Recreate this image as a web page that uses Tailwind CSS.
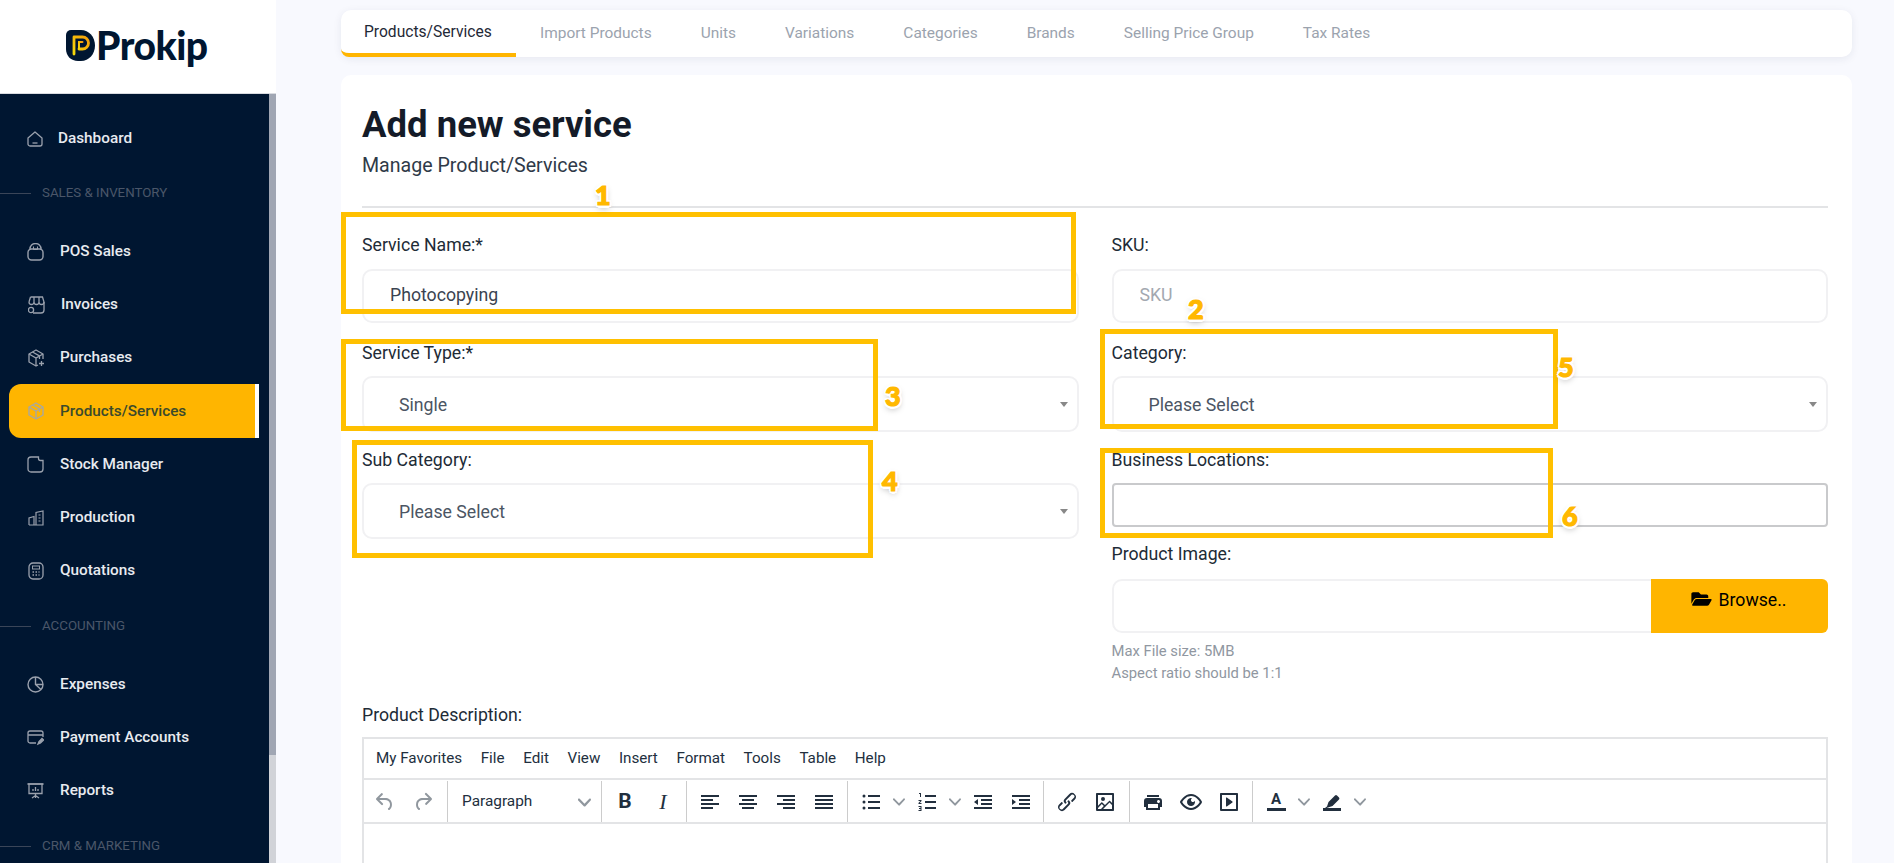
<!doctype html>
<html lang="en">
  <head>
    <meta charset="UTF-8" />
    <title>Add new service</title>
    <script src="https://cdn.jsdelivr.net/npm/@tailwindcss/browser@4"></script>
  </head>
  <body class="bg-[#f8f9fe] font-[Roboto,sans-serif] text-[#212b36]">
    <div class="relative flex h-[863px] w-[1894px] overflow-hidden">

      <!-- Sidebar -->
      <aside class="flex w-[276px] shrink-0 flex-col">
        <div class="flex h-[94px] items-center border-b border-[#d9dbe0] bg-white pb-[3px] pl-[66px]">
          <svg class="h-[31px] w-[29px] shrink-0" viewBox="0 0 29 31">
            <defs><linearGradient id="logoP" x1="0" y1="1" x2="1" y2="0"><stop offset="0" stop-color="#f5d90a" /><stop offset="1" stop-color="#f59e0b" /></linearGradient></defs>
            <path d="M0 5a5 5 0 0 1 5-5h10c8 0 14 7 14 15.500S23 31 15 31h-3C5 31 0 26 0 19Z" fill="#001631" />
            <path d="M8 24V7h8.500a6 6 0 0 1 0 12H13" fill="none" stroke="url(#logoP)" stroke-width="2.800" stroke-linecap="round" stroke-linejoin="round" />
            <path d="M13 19v-7h3.500" fill="none" stroke="url(#logoP)" stroke-width="2" stroke-linecap="round" />
          </svg>
          <span class="ml-[1px] font-[Lato,sans-serif] text-[39px] leading-none font-black tracking-[-0.5px] text-[#001631]">Prokip</span>
        </div>
        <div class="flex min-h-0 flex-1">
          <nav class="w-[269px] overflow-hidden bg-[#001631] pt-[18px] text-[15.300px] font-medium text-[#e8ebf0]">
            <a class="flex h-[53px] items-center pl-[27px]">
              <svg class="h-[16px] w-[16px] shrink-0 text-[#9aa1ad]" viewBox="0 0 16 16" fill="none" stroke="currentColor" stroke-width="1.300"><path d="M1 7l7-6 7 6v6a2 2 0 0 1-2 2H3a2 2 0 0 1-2-2Z" stroke-linejoin="round" /><path d="M5.500 12h5" /></svg>
              <span class="ml-[15px]">Dashboard</span>
            </a>
            <div class="mt-[13px] flex h-[30px] items-center gap-[11px] text-[13.300px] font-normal text-[#4b5669]">
              <span class="h-px w-[31px] bg-[#3a4558]"></span>SALES &amp; INVENTORY
            </div>
            <div class="h-[17px]"></div>
            <a class="flex h-[53px] items-center pl-[27px]">
              <svg class="h-[18px] w-[17px] shrink-0 text-[#9aa1ad]" viewBox="0 0 17 18" fill="none" stroke="currentColor" stroke-width="1.400"><path d="M3 6a5.500 5.500 0 0 1 11 0" /><rect x="1" y="6" width="15" height="11" rx="3.500" /><path d="M6.500 3.500v3h4v-3" stroke-width="1" /></svg>
              <span class="ml-[16px]">POS Sales</span>
            </a>
            <a class="flex h-[53px] items-center pl-[28px]">
              <svg class="h-[18px] w-[17px] shrink-0 text-[#9aa1ad]" viewBox="0 0 17 18" fill="none" stroke="currentColor" stroke-width="1.300"><path d="M2.500 1h12l1.500 5v8a3 3 0 0 1-3 3H5" /><path d="M1 6a2.500 2.500 0 0 0 5 0 2.500 2.500 0 0 0 5 0 2.500 2.500 0 0 0 5 0M6 1v5M11 1v5M1 6l1.500-5" /><circle cx="3" cy="14" r="2.600" /></svg>
              <span class="ml-[16px]">Invoices</span>
            </a>
            <a class="flex h-[53px] items-center pl-[28px]">
              <svg class="h-[18px] w-[17px] shrink-0 text-[#9aa1ad]" viewBox="0 0 17 18" fill="none" stroke="currentColor" stroke-width="1.300"><path d="M10 16l-2 1-7-4V5l7-4 7 4v5" stroke-linejoin="round" /><path d="M1 5l7 4 7-4M8 9v8M4.500 3l7 4v3" /><path d="M13.500 12v5M11 14.500h5" /></svg>
              <span class="ml-[15px]">Purchases</span>
            </a>
            <a class="relative ml-[9px] flex h-[54px] w-[250px] items-center rounded-l-[12px] border-r-4 border-white bg-[#ffb500] pl-[19px] text-[#3b4a2c]">
              <svg class="h-[18px] w-[16px] shrink-0 text-[#a8a8a0]" viewBox="0 0 16 18" fill="none" stroke="currentColor" stroke-width="1.400"><path d="M8 1l7 4v8l-7 4-7-4V5Z" stroke-linejoin="round" /><path d="M1 5l7 4 7-4M8 9v8M4.500 3l7 4v3" /></svg>
              <span class="ml-[16px]">Products/Services</span>
            </a>
            <a class="flex h-[53px] items-center pl-[27px]">
              <svg class="h-[17px] w-[17px] shrink-0 text-[#9aa1ad]" viewBox="0 0 17 17" fill="none" stroke="currentColor" stroke-width="1.300"><path d="M1 4a3 3 0 0 1 3-3h7.500v1.500a2 2 0 0 0 2 2H16V13a3 3 0 0 1-3 3H4a3 3 0 0 1-3-3Z" /></svg>
              <span class="ml-[16px]">Stock Manager</span>
            </a>
            <a class="flex h-[53px] items-center pl-[28px]">
              <svg class="h-[16px] w-[16px] shrink-0 text-[#9aa1ad]" viewBox="0 0 16 16" fill="none" stroke="currentColor" stroke-width="1.200"><path d="M1 15V8l5-1.500V15M1 15h14V1l-7 1.500V15" /><path d="M10.500 5h2M10.500 8h2M10.500 11h2" /></svg>
              <span class="ml-[16px]">Production</span>
            </a>
            <a class="flex h-[53px] items-center pl-[28px]">
              <svg class="h-[18px] w-[16px] shrink-0 text-[#9aa1ad]" viewBox="0 0 16 18" fill="none" stroke="currentColor" stroke-width="1.300"><rect x="1" y="1" width="14" height="16" rx="4" /><rect x="4.500" y="4" width="7" height="3" stroke-width="1" /><path d="M4.500 10h1.500M7.500 10h1.500M10.500 10h1M4.500 13h1.500M7.500 13h1.500M10.500 13h1" /></svg>
              <span class="ml-[16px]">Quotations</span>
            </a>
            <div class="mt-[14px] flex h-[30px] items-center gap-[11px] text-[13.300px] font-normal text-[#4b5669]">
              <span class="h-px w-[31px] bg-[#3a4558]"></span>ACCOUNTING
            </div>
            <div class="h-[17px]"></div>
            <a class="flex h-[53px] items-center pl-[27px]">
              <svg class="h-[17px] w-[17px] shrink-0 text-[#9aa1ad]" viewBox="0 0 17 17" fill="none" stroke="currentColor" stroke-width="1.400"><circle cx="8.500" cy="8.500" r="7.500" /><path d="M8.500 1v7.500l5.500 5M8.500 8.500H16" /></svg>
              <span class="ml-[16px]">Expenses</span>
            </a>
            <a class="flex h-[53px] items-center pl-[27px]">
              <svg class="h-[16px] w-[17px] shrink-0 text-[#9aa1ad]" viewBox="0 0 17 16" fill="none" stroke="currentColor" stroke-width="1.300"><path d="M9 13H3a2 2 0 0 1-2-2V3a2 2 0 0 1 2-2h11a2 2 0 0 1 2 2v4M1 5h15" /><path d="M11 14l1-2.500 3-3 1.500 1.500-3 3Z" fill="currentColor" /></svg>
              <span class="ml-[16px]">Payment Accounts</span>
            </a>
            <a class="flex h-[53px] items-center pl-[27px]">
              <svg class="h-[16px] w-[17px] shrink-0 text-[#9aa1ad]" viewBox="0 0 17 16" fill="none" stroke="currentColor" stroke-width="1.300"><path d="M0.500 1h16" stroke-width="1.800" /><path d="M2 1v9.500h13V1" /><path d="M6 8V6M8.500 8V4M11 8V6" /><path d="M8.500 11v2M5 15l3.500-2.500L12 15M8.500 12.500V15" /></svg>
              <span class="ml-[16px]">Reports</span>
            </a>
            <div class="mt-[14px] flex h-[30px] items-center gap-[11px] text-[13.300px] font-normal text-[#4b5669]">
              <span class="h-px w-[31px] bg-[#3a4558]"></span>CRM &amp; MARKETING
            </div>
          </nav>
          <div class="flex w-[7px] flex-col bg-[#d1d3d8]">
            <div class="h-[661px] bg-[#a0a6b3]"></div>
          </div>
        </div>
      </aside>

      <!-- Main -->
      <main class="ml-[65px] w-[1511px]">
        <div class="mt-[10px] flex h-[47px] rounded-[10px] bg-white text-[15.450px] text-[#9ba3ae] shadow-[0_2px_8px_rgba(30,40,80,0.08)]">
          <a class="h-[47px] w-[175px] rounded-bl-[8px] border-b-4 border-[#ffb500] pt-[11px] pl-[23px] text-[15.600px] text-[#1f2937]">Products/Services</a>
          <a class="ml-[24px] pt-[12px]">Import Products</a>
          <a class="ml-[49px] pt-[12px]">Units</a>
          <a class="ml-[49px] pt-[12px]">Variations</a>
          <a class="ml-[49px] pt-[12px]">Categories</a>
          <a class="ml-[49px] pt-[12px]">Brands</a>
          <a class="ml-[49px] pt-[12px]">Selling Price Group</a>
          <a class="ml-[49px] pt-[12px]">Tax Rates</a>
        </div>

        <section class="mt-[18px] h-[800px] rounded-[10px] bg-white pr-[24px] pl-[21px]">
          <h1 class="pt-[28px] text-[36.500px] leading-[44px] font-bold text-[#141b28]">Add new service</h1>
          <p class="mt-[6px] text-[19.600px] leading-[26px] text-[#2f3a48]">Manage Product/Services</p>
          <hr class="mt-[27px] border-t-2 border-[#e3e4e6]" />

          <div class="mt-[25px] grid grid-cols-2 gap-x-[33px] text-[17.700px]">
            <div>
              <label class="block leading-[24px]">Service Name:*</label>
              <input class="mt-[12px] h-[54px] w-full rounded-[10px] border-2 border-[#f1f1f3] pb-[3px] pl-[26px] text-[#3a4350]" value="Photocopying" />

              <label class="mt-[18px] block leading-[24px]">Service Type:*</label>
              <div class="relative mt-[11px] flex h-[56px] items-center rounded-[10px] border-2 border-[#f1f1f3] pt-[2px] pl-[35px] text-[#4b5563]">
                Single
                <span class="absolute top-[24px] right-[9px] border-x-[4px] border-t-[5px] border-x-transparent border-t-[#888]"></span>
              </div>

              <label class="mt-[16px] block leading-[24px]">Sub Category:</label>
              <div class="relative mt-[11px] flex h-[56px] items-center rounded-[10px] border-2 border-[#f1f1f3] pt-[2px] pl-[35px] text-[#4b5563]">
                Please Select
                <span class="absolute top-[24px] right-[9px] border-x-[4px] border-t-[5px] border-x-transparent border-t-[#888]"></span>
              </div>
            </div>

            <div>
              <label class="block leading-[24px]">SKU:</label>
              <input class="mt-[12px] h-[54px] w-full rounded-[10px] border-2 border-[#f1f1f3] pb-[3px] pl-[26px] placeholder:text-[#a3a8b0]" placeholder="SKU" />

              <label class="mt-[18px] block leading-[24px]">Category:</label>
              <div class="relative mt-[11px] flex h-[56px] items-center rounded-[10px] border-2 border-[#f1f1f3] pt-[2px] pl-[35px] text-[#4b5563]">
                Please Select
                <span class="absolute top-[24px] right-[9px] border-x-[4px] border-t-[5px] border-x-transparent border-t-[#888]"></span>
              </div>

              <label class="mt-[16px] block leading-[24px]">Business Locations:</label>
              <div class="mt-[11px] h-[44px] rounded-[4px] border-2 border-[#c9cacc]"></div>

              <label class="mt-[15px] block leading-[24px]">Product Image:</label>
              <div class="mt-[13px] flex h-[54px] rounded-[10px] border-2 border-[#f1f1f3]">
                <div class="flex-1"></div>
                <button class="-my-[2px] -mr-[2px] flex h-[54px] w-[177px] items-start justify-center gap-[5px] rounded-r-[6px] bg-[#ffb500] pt-[8px] pr-[2px] text-black">
                  <svg class="mt-[3px] h-[18px] w-[23px]" viewBox="0 0 576 512" fill="currentColor"><path d="M572.694 292.093L500.27 416.248A63.997 63.997 0 0 1 444.989 448H45.025c-18.523 0-30.064-20.093-20.731-36.093l72.424-124.155A64 64 0 0 1 152 256h399.964c18.523 0 30.064 20.093 20.73 36.093zM152 224h328v-48c0-26.51-21.49-48-48-48H272l-64-64H48C21.49 64 0 85.49 0 112v278.046l69.077-118.418C86.214 242.25 117.989 224 152 224z" /></svg>
                  Browse..
                </button>
              </div>
              <p class="mt-[7px] text-[14.800px] leading-[22px] text-[#9097a1]">Max File size: 5MB<br />Aspect ratio should be 1:1</p>
            </div>
          </div>

          <label class="mt-[19px] block text-[17.700px] leading-[24px]">Product Description:</label>

          <div class="mt-[10px] h-[200px] border-2 border-[#e3e4e6] text-[#222f3e]">
            <div class="flex h-[41px] items-center gap-[18.600px] border-b-2 border-[#e3e4e6] pl-[12px] text-[15.200px]">
              <span>My Favorites</span><span>File</span><span>Edit</span><span>View</span><span>Insert</span><span>Format</span><span>Tools</span><span>Table</span><span>Help</span>
            </div>
            <div class="flex h-[44px] border-b-2 border-[#e3e4e6] pt-[1px]">
              <!-- undo / redo -->
              <div class="flex items-center border-r border-[#ccc] pr-[5px] pl-[2px]">
                <span class="flex w-[38px] justify-center"><svg class="size-[24px] fill-[#222f3e]/50" viewBox="0 0 24 24"><path d="M6.400 8H12c3.700 0 6.200 2 6.800 5.100.6 2.700-.4 5.600-2.300 6.800a1 1 0 0 1-1-1.800c1.100-.6 1.800-2.700 1.400-4.600-.5-2.100-2.100-3.500-4.900-3.500H6.400l3.300 3.300a1 1 0 1 1-1.400 1.400l-5-5a1 1 0 0 1 0-1.400l5-5a1 1 0 0 1 1.400 1.400L6.400 8Z" /></svg></span>
                <span class="flex w-[38px] justify-center"><svg class="size-[24px] fill-[#222f3e]/50" viewBox="0 0 24 24"><path d="M17.600 10H12c-2.800 0-4.400 1.400-4.900 3.500-.4 2 .3 4 1.400 4.600a1 1 0 1 1-1 1.800c-2-1.200-2.900-4.100-2.300-6.800.6-3 3-5.100 6.800-5.100h5.600l-3.300-3.300a1 1 0 1 1 1.400-1.400l5 5a1 1 0 0 1 0 1.400l-5 5a1 1 0 0 1-1.400-1.400l3.300-3.300Z" /></svg></span>
              </div>
              <!-- block format -->
              <div class="flex w-[154px] items-center border-r border-[#ccc] pt-[1px] pl-[14px] text-[15.400px]">
                <span>Paragraph</span>
                <svg class="mr-[10px] ml-auto size-[13px] fill-[#222f3e]/50" viewBox="0 0 10 10"><path d="M8.700 2.200c.3-.3.800-.3 1 0 .4.400.4.900 0 1.200L5.700 7.800c-.3.300-.9.300-1.200 0L.2 3.400a.8.800 0 0 1 0-1.200c.3-.3.800-.3 1.100 0L5 6l3.700-3.800Z" /></svg>
              </div>
              <!-- bold / italic -->
              <div class="flex items-center border-r border-[#ccc] px-[4px]">
                <span class="flex w-[38px] justify-center text-[21px] leading-none font-bold">B</span>
                <span class="flex w-[38px] justify-center font-['Liberation_Serif',serif] text-[22px] leading-none italic">I</span>
              </div>
              <!-- alignment -->
              <div class="flex items-center border-r border-[#ccc] pr-[4px] pl-[4px]">
                <span class="flex w-[38px] justify-center"><svg class="size-[24px] fill-[#222f3e]" viewBox="0 0 24 24"><path d="M3 5h18v2H3zM3 9h12v2H3zM3 13h18v2H3zM3 17h12v2H3z" /></svg></span>
                <span class="flex w-[38px] justify-center"><svg class="size-[24px] fill-[#222f3e]" viewBox="0 0 24 24"><path d="M3 5h18v2H3zM6 9h12v2H6zM3 13h18v2H3zM6 17h12v2H6z" /></svg></span>
                <span class="flex w-[38px] justify-center"><svg class="size-[24px] fill-[#222f3e]" viewBox="0 0 24 24"><path d="M3 5h18v2H3zM9 9h12v2H9zM3 13h18v2H3zM9 17h12v2H9z" /></svg></span>
                <span class="flex w-[38px] justify-center"><svg class="size-[24px] fill-[#222f3e]" viewBox="0 0 24 24"><path d="M3 5h18v2H3zM3 9h18v2H3zM3 13h18v2H3zM3 17h18v2H3z" /></svg></span>
              </div>
              <!-- lists and indent -->
              <div class="flex items-center border-r border-[#ccc] pr-[3px] pl-[4px]">
                <span class="flex w-[38px] justify-center"><svg class="size-[24px] fill-[#222f3e]" viewBox="0 0 24 24"><path d="M9 5h12v2H9zM9 11h12v2H9zM9 17h12v2H9z" /><circle cx="5" cy="6" r="1.500" /><circle cx="5" cy="12" r="1.500" /><circle cx="5" cy="18" r="1.500" /></svg></span>
                <span class="flex w-[18px] pl-[3px]"><svg class="size-[12px] fill-[#222f3e]/50" viewBox="0 0 10 10"><path d="M8.700 2.200c.3-.3.800-.3 1 0 .4.400.4.900 0 1.200L5.700 7.800c-.3.300-.9.300-1.200 0L.2 3.400a.8.800 0 0 1 0-1.200c.3-.3.800-.3 1.100 0L5 6l3.700-3.800Z" /></svg></span>
                <span class="flex w-[38px] justify-center"><svg class="size-[24px] fill-[#222f3e]" viewBox="0 0 24 24"><path d="M10 5h11v2H10zM10 11h11v2H10zM10 17h11v2H10z" /><path d="M4 3h2v4H5V4H4zM3.500 10h3v1l-1.800 2h1.800v1h-3v-1l1.800-2H3.500zM3.500 16h3v5h-3v-1h2v-1h-1.500v-1h1.500v-1h-2z" /></svg></span>
                <span class="flex w-[18px] pl-[3px]"><svg class="size-[12px] fill-[#222f3e]/50" viewBox="0 0 10 10"><path d="M8.700 2.200c.3-.3.800-.3 1 0 .4.400.4.900 0 1.200L5.700 7.800c-.3.300-.9.300-1.200 0L.2 3.400a.8.800 0 0 1 0-1.200c.3-.3.800-.3 1.100 0L5 6l3.700-3.800Z" /></svg></span>
                <span class="flex w-[38px] justify-center"><svg class="size-[24px] fill-[#222f3e]" viewBox="0 0 24 24"><path d="M3 5h18v2H3zM10 9h11v2H10zM10 13h11v2H10zM3 17h18v2H3zM7 9v6l-4-3z" /></svg></span>
                <span class="flex w-[38px] justify-center"><svg class="size-[24px] fill-[#222f3e]" viewBox="0 0 24 24"><path d="M3 5h18v2H3zM10 9h11v2H10zM10 13h11v2H10zM3 17h18v2H3zM3 9v6l4-3z" /></svg></span>
              </div>
              <!-- link / image -->
              <div class="flex items-center border-r border-[#ccc] pr-[5px] pl-[4px]">
                <span class="flex w-[38px] justify-center"><svg class="size-[24px] fill-[#222f3e]" viewBox="0 0 24 24"><path d="M6.200 12.300a1 1 0 0 1 1.400 1.400l-2 2a2 2 0 1 0 2.600 2.800l4.800-4.800a1 1 0 0 0 0-1.400 1 1 0 1 1 1.400-1.300 2.900 2.900 0 0 1 0 4L9.600 20a3.900 3.900 0 0 1-5.500-5.500l2-2Zm11.600-.6a1 1 0 0 1-1.400-1.400l2-2a2 2 0 1 0-2.600-2.800L11 10.300a1 1 0 0 0 0 1.400A1 1 0 1 1 9.600 13a2.900 2.900 0 0 1 0-4L14.400 4a3.900 3.900 0 0 1 5.500 5.500l-2 2Z" /></svg></span>
                <span class="flex w-[38px] justify-center"><svg class="size-[24px] fill-[#222f3e]" viewBox="0 0 24 24"><path fill-rule="evenodd" d="M4 3h16c.6 0 1 .4 1 1v16c0 .6-.4 1-1 1H4a1 1 0 0 1-1-1V4c0-.6.4-1 1-1Zm1 12.700 3.300-3.200c.3-.3.700-.3 1 0L12 15l4.100-4c.3-.4.800-.4 1 0l2 1.900V5H5v10.700ZM5 18v1h3l2.800-2.900-2-2L5 17.900Zm14-3-2.500-2.400-6.400 6.500H19v-4Zm-9-4a2 2 0 1 0 0-4 2 2 0 0 0 0 4Z" /></svg></span>
              </div>
              <!-- print / preview / media -->
              <div class="flex items-center border-r border-[#ccc] pr-[4px] pl-[4px]">
                <span class="flex w-[38px] justify-center"><svg class="size-[24px] fill-[#222f3e]" viewBox="0 0 24 24"><path fill-rule="evenodd" d="M18 8H6a3 3 0 0 0-3 3v6h2v3h14v-3h2v-6a3 3 0 0 0-3-3Zm-1 10H7v-4h10v4Zm.5-5c-.8 0-1.500-.7-1.500-1.500s.7-1.500 1.500-1.500 1.500.7 1.500 1.500-.7 1.500-1.500 1.500ZM18 5H6v2h12V5Z" /></svg></span>
                <span class="flex w-[38px] justify-center"><svg class="size-[24px] fill-[#222f3e]" viewBox="0 0 24 24"><path d="M3.500 12.500c.5.800 1.100 1.600 1.800 2.300 2 2 4.200 3.200 6.700 3.200s4.700-1.200 6.700-3.200a16.200 16.200 0 0 0 2.100-2.800 15.700 15.700 0 0 0-2.100-2.800c-2-2-4.200-3.200-6.700-3.200a9.300 9.300 0 0 0-6.700 3.200A16.200 16.200 0 0 0 3.200 12c0 .2.200.3.300.5Zm-2.400-1 .7-1.200L4 7.800C6.200 5.400 8.900 4 12 4c3 0 5.800 1.400 8.100 3.800a18.200 18.200 0 0 1 2.800 3.700v1l-.7 1.200-2.100 2.500c-2.300 2.400-5 3.800-8.100 3.800-3 0-5.800-1.400-8.100-3.800a18.200 18.200 0 0 1-2.800-3.700 1 1 0 0 1 0-1Zm12-3.300a2 2 0 1 0 2.700 2.600 4 4 0 1 1-2.700-2.600Z" /></svg></span>
                <span class="flex w-[38px] justify-center"><svg class="size-[24px] fill-[#222f3e]" viewBox="0 0 24 24"><path d="M4 3h16c.6 0 1 .4 1 1v16c0 .6-.4 1-1 1H4a1 1 0 0 1-1-1V4c0-.6.4-1 1-1Zm1 2v14h14V5H5Zm4.800 2.600 5.600 4a.5.500 0 0 1 0 .8l-5.600 4A.5.500 0 0 1 9 16V8a.5.500 0 0 1 .8-.4Z" /></svg></span>
              </div>
              <!-- text colour / highlight -->
              <div class="flex items-center pl-[4px]">
                <span class="flex w-[38px] flex-col items-center"><span class="text-[15px] leading-[15px] font-bold">A</span><span class="mt-[1px] h-[3px] w-[19px] bg-[#222f3e]"></span></span>
                <span class="flex w-[18px] pl-[3px]"><svg class="size-[12px] fill-[#222f3e]/50" viewBox="0 0 10 10"><path d="M8.700 2.200c.3-.3.800-.3 1 0 .4.400.4.900 0 1.200L5.700 7.800c-.3.300-.9.300-1.200 0L.2 3.400a.8.800 0 0 1 0-1.200c.3-.3.800-.3 1.100 0L5 6l3.700-3.800Z" /></svg></span>
                <span class="flex w-[38px] justify-center"><svg class="size-[24px] fill-[#222f3e]" viewBox="0 0 24 24"><path d="M3 18h18v3H3z" /><path d="M7 16.500 8.500 12 15 5.500a1.500 1.500 0 0 1 2 0l2 2a1.500 1.500 0 0 1 0 2l-6.500 6.500L8 17.500 6.500 18l-1.500-.2 2-1.300Z" /></svg></span>
                <span class="flex w-[18px] pl-[3px]"><svg class="size-[12px] fill-[#222f3e]/50" viewBox="0 0 10 10"><path d="M8.700 2.200c.3-.3.800-.3 1 0 .4.400.4.900 0 1.200L5.700 7.800c-.3.300-.9.300-1.200 0L.2 3.400a.8.800 0 0 1 0-1.200c.3-.3.800-.3 1.100 0L5 6l3.700-3.800Z" /></svg></span>
              </div>
            </div>
          </div>
        </section>
      </main>

      <!-- Annotation boxes drawn over the form -->
      <div class="absolute top-[212px] left-[341px] h-[102px] w-[735px] border-[5px] border-[#ffc000]"></div>
      <div class="absolute top-[339px] left-[341px] h-[92px] w-[537px] border-[5px] border-[#ffc000]"></div>
      <div class="absolute top-[440px] left-[352px] h-[118px] w-[521px] border-[5px] border-[#ffc000]"></div>
      <div class="absolute top-[329px] left-[1100px] h-[100px] w-[458px] border-[5px] border-[#ffc000]"></div>
      <div class="absolute top-[448px] left-[1100px] h-[90px] w-[453px] border-[5px] border-[#ffc000]"></div>

      <span class="absolute top-[179px] left-[595px] font-[Lato,sans-serif] text-[27px] leading-[32px] font-black text-[#ffb800] [-webkit-text-stroke:1.2px_#ffb800] [text-shadow:2.500px_0_0_#fff,-2.500px_0_0_#fff,0_2.500px_0_#fff,0_-2.500px_0_#fff,2px_2px_0_#fff,-2px_-2px_0_#fff,2px_-2px_0_#fff,-2px_2px_0_#fff,0_3px_6px_rgba(0,0,0,0.35)]">1</span>
      <span class="absolute top-[293px] left-[1188px] font-[Lato,sans-serif] text-[27px] leading-[32px] font-black text-[#ffb800] [-webkit-text-stroke:1.2px_#ffb800] [text-shadow:2.500px_0_0_#fff,-2.500px_0_0_#fff,0_2.500px_0_#fff,0_-2.500px_0_#fff,2px_2px_0_#fff,-2px_-2px_0_#fff,2px_-2px_0_#fff,-2px_2px_0_#fff,0_3px_6px_rgba(0,0,0,0.35)]">2</span>
      <span class="absolute top-[380px] left-[885px] font-[Lato,sans-serif] text-[27px] leading-[32px] font-black text-[#ffb800] [-webkit-text-stroke:1.2px_#ffb800] [text-shadow:2.500px_0_0_#fff,-2.500px_0_0_#fff,0_2.500px_0_#fff,0_-2.500px_0_#fff,2px_2px_0_#fff,-2px_-2px_0_#fff,2px_-2px_0_#fff,-2px_2px_0_#fff,0_3px_6px_rgba(0,0,0,0.35)]">3</span>
      <span class="absolute top-[465px] left-[882px] font-[Lato,sans-serif] text-[27px] leading-[32px] font-black text-[#ffb800] [-webkit-text-stroke:1.2px_#ffb800] [text-shadow:2.500px_0_0_#fff,-2.500px_0_0_#fff,0_2.500px_0_#fff,0_-2.500px_0_#fff,2px_2px_0_#fff,-2px_-2px_0_#fff,2px_-2px_0_#fff,-2px_2px_0_#fff,0_3px_6px_rgba(0,0,0,0.35)]">4</span>
      <span class="absolute top-[351px] left-[1558px] font-[Lato,sans-serif] text-[27px] leading-[32px] font-black text-[#ffb800] [-webkit-text-stroke:1.2px_#ffb800] [text-shadow:2.500px_0_0_#fff,-2.500px_0_0_#fff,0_2.500px_0_#fff,0_-2.500px_0_#fff,2px_2px_0_#fff,-2px_-2px_0_#fff,2px_-2px_0_#fff,-2px_2px_0_#fff,0_3px_6px_rgba(0,0,0,0.35)]">5</span>
      <span class="absolute top-[500px] left-[1562px] font-[Lato,sans-serif] text-[27px] leading-[32px] font-black text-[#ffb800] [-webkit-text-stroke:1.2px_#ffb800] [text-shadow:2.500px_0_0_#fff,-2.500px_0_0_#fff,0_2.500px_0_#fff,0_-2.500px_0_#fff,2px_2px_0_#fff,-2px_-2px_0_#fff,2px_-2px_0_#fff,-2px_2px_0_#fff,0_3px_6px_rgba(0,0,0,0.35)]">6</span>
    </div>
  </body>
</html>
